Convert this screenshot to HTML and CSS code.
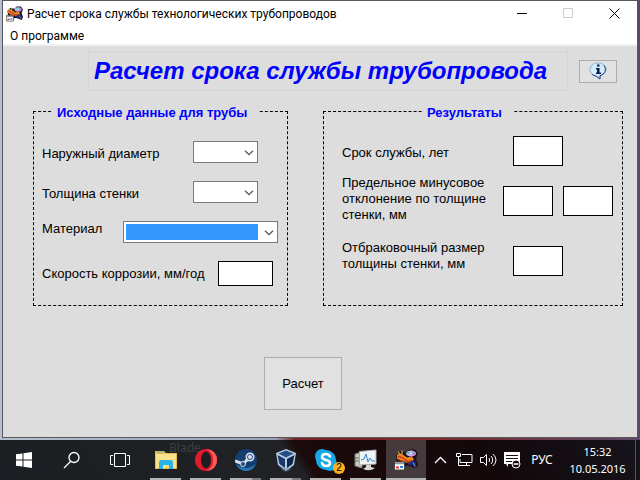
FILE: index.html
```html
<!DOCTYPE html>
<html lang="ru">
<head>
    <meta charset="UTF-8">
    <meta name="viewport" content="width=device-width, initial-scale=1.0">
    <title>Расчет срока службы технологических трубопроводов</title>
    <link rel="stylesheet" href="styles.css">
</head>
<body>

<!-- shared icons -->
<svg class="sprite" aria-hidden="true">
    <symbol id="app-icon" viewBox="0 0 24 21">
        <path d="M2 6l4-4 6 1 3-3h6l3 4-2 5 2 6-2 4-5-2-3-1-5 1-6-4z" fill="#1a1020"/>
        <path d="M3 5l4-1 6 4 5-1 2 3-5 4-8-2-4-3z" fill="#f08020"/>
        <path d="M4 7l4 1 6 4 4-1M5 10l4 2 5 1" stroke="#a02c10" fill="none"/>
        <path d="M4 2l2 3M8 1v4" stroke="#f0d030"/>
        <ellipse cx="17" cy="4" rx="5" ry="3" fill="#c8b0f0"/>
        <path d="M13 3l4 1 3-2" stroke="#30c8a0" stroke-width="1.500" fill="none"/>
        <path d="M17 5l4-1" stroke="#e040c0"/>
        <circle cx="17" cy="4" r="1" fill="#fff"/>
        <path d="M14 13l6-2 2 2v6l-4-4-3 1z" fill="#202c80"/>
        <path d="M19 13l2 4" stroke="#7090e0"/>
        <path d="M.5 12.500h10v8H.5z" fill="#fff" stroke="#444"/>
        <path d="M1 14h9" stroke="#8a90a0" stroke-width="1.500"/>
        <path d="M2 18h3" stroke="#e03030" stroke-width="2"/>
        <path d="M6 17.500h3" stroke="#3080e0" stroke-width="2"/>
    </symbol>
    <symbol id="chevron" viewBox="0 0 10 6">
        <path d="M1 .7l4 4 4-4" fill="none" stroke="#555" stroke-width="1.300"/>
    </symbol>
</svg>

<div class="desktop">
    <main class="window">
        <div class="titlebar">
            <svg class="titlebar-icon"><use href="#app-icon"/></svg>
            <span class="titlebar-text">Расчет срока службы технологических трубопроводов</span>
            <button class="win-btn" aria-label="Свернуть">
                <svg width="11" height="11"><path d="M0 5.500h10" stroke="#000"/></svg>
            </button>
            <button class="win-btn" aria-label="Развернуть" disabled>
                <svg width="11" height="11"><path d="M.5 .5h9v9h-9z" stroke="#ccc" fill="none"/></svg>
            </button>
            <button class="win-btn" aria-label="Закрыть">
                <svg width="11" height="11"><path d="M.5 .5l10 10M10.500 .5l-10 10" stroke="#000"/></svg>
            </button>
        </div>

        <nav class="menu">
            <button class="menu-item">О программе</button>
        </nav>

        <form class="form">
            <div class="head">
                <h1>Расчет срока службы трубопровода</h1>
                <button type="button" class="btn btn-info" aria-label="Справка">
                    <svg width="18" height="18" viewBox="0 0 18 18">
                        <path d="M9 1C4 1 1 4 1 7.500S4 14 7 14l4 3v-3.200c3-.5 6-3 6-6.300S14 1 9 1z" fill="#d4ecfa" stroke="#8db0d0"/>
                        <path d="M15 3.500c3 4 1 8.500-4 10.200V17l-4-3q-2 0-4-2" fill="none" stroke="#1c4480"/>
                        <path d="M8 2.500h2.500v2H8zM7 6h3.500v4.500H12V12H7v-1.500h1V7.500H7z" fill="#0a1c50"/>
                    </svg>
                </button>
            </div>

            <div class="panels">
                <fieldset class="panel panel-input">
                    <legend>Исходные данные для трубы</legend>
                    <div class="row row-narrow">
                        <label for="diameter">Наружный диаметр</label>
                        <div class="combo">
                            <select id="diameter"><option></option></select>
                            <svg class="combo-arrow"><use href="#chevron"/></svg>
                        </div>
                    </div>
                    <div class="row row-narrow">
                        <label for="thickness">Толщина стенки</label>
                        <div class="combo">
                            <select id="thickness"><option></option></select>
                            <svg class="combo-arrow"><use href="#chevron"/></svg>
                        </div>
                    </div>
                    <div class="row row-wide">
                        <label for="material">Материал</label>
                        <div class="combo">
                            <select id="material" class="selected"><option></option></select>
                            <svg class="combo-arrow"><use href="#chevron"/></svg>
                        </div>
                    </div>
                    <div class="row row-speed">
                        <label for="speed">Скорость коррозии, мм/год</label>
                        <input type="text" id="speed">
                    </div>
                </fieldset>

                <fieldset class="panel panel-result">
                    <legend>Результаты</legend>
                    <div class="row row-life">
                        <label for="life">Срок службы, лет</label>
                        <input type="text" id="life" readonly>
                    </div>
                    <div class="row row-limit">
                        <label for="limitMin">Предельное минусовое<br>отклонение по толщине<br>стенки, мм</label>
                        <div class="pair">
                            <input type="text" id="limitMin" readonly>
                            <input type="text" id="limitMax" aria-label="Отклонение, мм" readonly>
                        </div>
                    </div>
                    <div class="row row-reject">
                        <label for="reject">Отбраковочный размер<br>толщины стенки, мм</label>
                        <input type="text" id="reject" readonly>
                    </div>
                </fieldset>
            </div>

            <button type="button" class="btn btn-calc">Расчет</button>
        </form>
    </main>

    <footer class="taskbar">
        <span class="desktop-label">Blade</span>
        <button class="task sys" aria-label="Пуск">
            <svg width="16" height="16"><path d="M0 2.300l6.500-.9v6.100H0zM7.500 1.200L16 0v7.500H7.500zM0 8.500h6.500v6.100L0 13.700zM7.500 8.500H16V16l-8.500-1.200z" fill="#fff"/></svg>
        </button>
        <button class="task sys" aria-label="Поиск">
            <svg width="18" height="18"><g fill="none" stroke="#fff" stroke-width="1.300"><circle cx="11" cy="6.500" r="5"/><path d="M7.500 10.500L1 17"/></g></svg>
        </button>
        <button class="task sys" aria-label="Представление задач">
            <svg width="20" height="16"><path d="M4.500 1.500h11v13h-11zM3 3.500H.5v9H3M17 3.500h2.500v9H17" fill="none" stroke="#fff"/></svg>
        </button>
        <div class="apps">
            <button class="task running" aria-label="Проводник">
                <svg width="22" height="20"><path d="M0 1h9l2 2h11v16H0z" fill="#e8bc4c"/><path d="M1 4h20v14H1z" fill="#fbe08a"/><path d="M2 2h6" stroke="#6ab0d0"/><path d="M4 19v-7q0-2 2-2h10q2 0 2 2v7h-4v-4H8v4z" fill="#28b4ea"/></svg>
            </button>
            <button class="task running" aria-label="Opera">
                <svg width="24" height="24"><ellipse cx="12" cy="12" rx="11" ry="11" fill="#e2182c"/><path d="M12 1q11 1 11 11T12 23q7-3 7-11T12 1z" fill="#fa5a58"/><ellipse cx="12" cy="12" rx="5" ry="8.500" fill="#1d1e22"/></svg>
            </button>
            <button class="task running grouped" aria-label="Steam">
                <svg width="22" height="22"><circle cx="11" cy="11" r="11" fill="#153e70"/><path d="M1 15q10 8 20 0-3 7-10 7T1 15z" fill="#2878b0"/><path d="M0 12l8 3 6-6" stroke="#d4dfe8" stroke-width="3" fill="none"/><circle cx="15" cy="8" r="4.500" fill="#d4dfe8"/><circle cx="15" cy="8" r="2.500" fill="#dce5ee" stroke="#234a78"/><circle cx="8" cy="15" r="2.500" fill="#234a78" stroke="#d4dfe8"/></svg>
            </button>
            <button class="task running grouped" aria-label="VirtualBox">
                <svg width="22" height="24"><path d="M11 1l10 4-2 12-8 6-8-6L1 5z" fill="#b8cce0"/><path d="M11 2.500l7.500 3L11 9.500 3.500 5.500z" fill="#254f86"/><path d="M2.500 7l7.500 4v9l-5.500-4z" fill="#16396c"/><path d="M19.500 7L12 11v9l5.500-4z" fill="#0d264e"/><path d="M5 18q6 4 12 0l-2 4q-4 3-8 0z" fill="#6d87a8" opacity=".5"/></svg>
            </button>
            <button class="task running" aria-label="Skype, 2 уведомления">
                <svg width="22" height="22"><circle cx="7" cy="7" r="7" fill="#18a8e8"/><circle cx="15" cy="15" r="7" fill="#18a8e8"/><circle cx="11" cy="11" r="10" fill="#18a8e8"/><path d="M15 7.500Q14 5 11 5 7 5 7 8q0 2 4 3t4 3q0 3-4 3-3 0-4-3" stroke="#fff" stroke-width="2.500" fill="none" stroke-linecap="round"/></svg>
                <span class="badge">2</span>
            </button>
            <button class="task running" aria-label="Диспетчер задач">
                <svg width="24" height="22"><path d="M1 5l7-2v16l-7-2z" fill="#c8c8c0" stroke="#777"/><path d="M1 9h4M1 12h4" stroke="#5a7a48"/><path d="M5.500 2.500L22 1v14L5.500 16z" fill="#eef3f6" stroke="#a8acb0"/><path d="M7 11l3-1 2-5 2 8 2-4 2 3h3" fill="none" stroke="#3685c8"/><path d="M12 16h5v2l4 1q-5 4-12 1l3-2z" fill="#d4d6d8"/></svg>
            </button>
            <button class="task running active" aria-label="Расчет срока службы">
                <svg width="24" height="22"><use href="#app-icon"/></svg>
            </button>
        </div>
        <div class="tray">
            <button class="task tray-btn" aria-label="Скрытые значки">
                <svg width="13" height="8"><path d="M1 7l5.500-5.500L12 7" fill="none" stroke="#fff" stroke-width="1.300"/></svg>
            </button>
            <button class="task tray-btn" aria-label="Сеть">
                <svg width="17" height="14"><path d="M6 1.500h10v8H4V6M6 12.500h8M10.500 9.500v3M.5 .5h4v3h-4zM2.500 4v8.500H6" fill="none" stroke="#fff"/></svg>
            </button>
            <button class="task tray-btn" aria-label="Громкость">
                <svg width="17" height="14"><path d="M.5 4.500h3l3-3v11l-3-3h-3zM9 5q1.500 2 0 4M11 3q3.500 4 0 8M13 1q6 6 0 12" fill="none" stroke="#fff"/></svg>
            </button>
            <button class="task tray-btn" aria-label="Уведомления">
                <svg width="17" height="17"><path d="M0 0h16v12H4v3l-2-3H0z" fill="#fff"/><path d="M2 3.500h12M2 6.500h12M2 9.500h6" stroke="#1a0c0e"/><circle cx="12" cy="12" r="4" fill="#1a0c0e" stroke="#fff"/><path d="M9.500 12h5" stroke="#fff" stroke-width="1.500"/></svg>
            </button>
            <button class="task lang">РУС</button>
            <button class="task clock"><span>15:32</span><span>10.05.2016</span></button>
        </div>
    </footer>
</div>

</body>
</html>
```

FILE: styles.css
```css
* {
    box-sizing: border-box;
}

body {
    margin: 0;
    font-family: "Liberation Sans", Arial, sans-serif;
    font-size: 13px;
    line-height: 16px;
    color: #000;
}

button {
    margin: 0;
    padding: 0;
    border: none;
    background: none;
    font: inherit;
    color: inherit;
}

svg {
    display: block;
}

.sprite {
    position: absolute;
    width: 0;
    height: 0;
}

.desktop {
    display: flex;
    flex-direction: column;
    min-height: 100vh;
    background: linear-gradient(90deg, #b4bfd0 0, #98a4bb 43%, #7c2428 46%, #802a2c 68%, #5c4868 100%);
}

/* Application window */
.window {
    flex: 1;
    display: flex;
    flex-direction: column;
    margin: 0 2px 2px;
    border: 1px solid #585858;
    background: #ddd;
}

.titlebar {
    display: flex;
    align-items: center;
    height: 25px;
    padding-left: 3px;
    background: #fff;
    font-family: Roboto, sans-serif;
    font-size: 12px;
}

.titlebar-icon {
    width: 17px;
    height: 16px;
    margin-right: 4px;
}

.titlebar-text {
    flex: 1;
    white-space: nowrap;
}

.win-btn {
    display: flex;
    align-items: center;
    justify-content: center;
    width: 46px;
    height: 25px;
}

.menu {
    height: 20px;
    padding-left: 7px;
    border-bottom: 2px solid #f0f0f0;
    background: #fff;
    font-family: Roboto, sans-serif;
    font-size: 12px;
}

.menu-item {
    display: block;
    line-height: 20px;
}

.form {
    flex: 1;
}

.head {
    display: flex;
    align-items: center;
    gap: 11px;
    padding: 5px 20px 0 85px;
}

h1 {
    flex: 1;
    margin: 0;
    padding: 0 5px;
    border: 1px solid #d5d5d5;
    font-size: 24px;
    font-style: italic;
    line-height: 38px;
    white-space: nowrap;
    color: #00f;
}

.btn {
    border: 1px solid #adadad;
    background: #e1e1e1;
}

.btn-info {
    display: flex;
    align-items: center;
    justify-content: center;
    width: 38px;
    height: 23px;
}

.btn-calc {
    width: 78px;
    height: 53px;
    margin: 51px 0 20px 261px;
}

/* Panels */
.panels {
    display: grid;
    grid-template-columns: 255fr 300fr;
    gap: 35px;
    padding: 11px 14px 0 30px;
}

.panel {
    min-width: 0;
    margin: 0;
    border: 1px dashed #000;
}

.panel-input {
    padding: 20px 9px 19px 8px;
}

.panel-result {
    padding: 15px 9px 19px 18px;
}

legend {
    padding: 3px 12px 0 4px;
    font-weight: bold;
    color: #00f;
}

.panel-input legend {
    margin-left: 11px;
}

.panel-result legend {
    margin-left: 81px;
}

.row {
    display: flex;
    align-items: center;
    justify-content: space-between;
}

.panel-input .row + .row {
    margin-top: 18px;
}

.row-narrow {
    padding-right: 20px;
}

.row-narrow label,
.row-life label {
    padding-top: 3px;
}

.row-narrow .combo {
    width: 65px;
}

.row-wide label {
    align-self: flex-start;
}

.row-wide .combo {
    width: 155px;
}

.row-speed {
    padding-right: 5px;
}

.row-speed input {
    width: 55px;
    height: 25px;
}

.row-life,
.row-reject {
    padding-right: 50px;
}

.row-limit {
    height: 52px;
    margin-top: 9px;
}

.row-reject {
    height: 42px;
    margin-top: 13px;
}

.row-limit label,
.row-reject label {
    align-self: flex-start;
}

.pair {
    display: flex;
    gap: 10px;
}

input {
    width: 50px;
    height: 30px;
    padding: 0 4px;
    border: 1px solid #000;
    background: #fff;
    font: inherit;
}

.combo {
    position: relative;
}

select {
    display: block;
    appearance: none;
    width: 100%;
    height: 22px;
    padding: 2px 19px 2px 2px;
    border: 1px solid #7a7a7a;
    border-radius: 0;
    background: #fff;
    font: inherit;
}

select.selected {
    background: linear-gradient(#39f, #39f) content-box, #fff;
}

.combo-arrow {
    position: absolute;
    top: 9px;
    right: 4px;
    width: 10px;
    height: 6px;
    pointer-events: none;
}

/* Taskbar */
.taskbar {
    position: relative;
    display: flex;
    height: 40px;
    background: linear-gradient(55deg, #1b1e22 0, #202225 46%, #1c0a0c 48%, #12080a 75%, #16141c 100%);
    color: #fff;
    font-family: "Noto Sans", sans-serif;
    font-size: 12px;
}

.desktop-label {
    position: absolute;
    left: 169px;
    top: 0;
    color: #3c3e40;
}

.task {
    position: relative;
    display: flex;
    align-items: center;
    justify-content: center;
    width: 40px;
}

.sys {
    width: 48px;
}

.apps {
    display: flex;
    margin-left: 2px;
}

.running::after {
    content: "";
    position: absolute;
    left: 4px;
    right: 5px;
    bottom: 0;
    height: 2px;
    background: #b4b4b4;
}

.grouped::after {
    background: linear-gradient(90deg, #b4b4b4 22px, #787878 22px);
}

.active {
    background: #453a3c;
}

.active::after {
    left: 0;
    right: 0;
}

.badge {
    position: absolute;
    right: 1px;
    bottom: 6px;
    width: 12px;
    height: 12px;
    border-radius: 50%;
    background: #fcb01c;
    color: #000;
    font-family: "Liberation Sans", Arial, sans-serif;
    font-size: 10px;
    line-height: 12px;
    text-align: center;
}

.tray {
    display: flex;
    margin-left: auto;
    padding-right: 4px;
}

.tray-btn {
    width: 24px;
}

.lang {
    width: 36px;
}

.clock {
    flex-direction: column;
    width: 76px;
    line-height: 17px;
    border-right: 1px solid #555;
    font-size: 11px;
}
```
